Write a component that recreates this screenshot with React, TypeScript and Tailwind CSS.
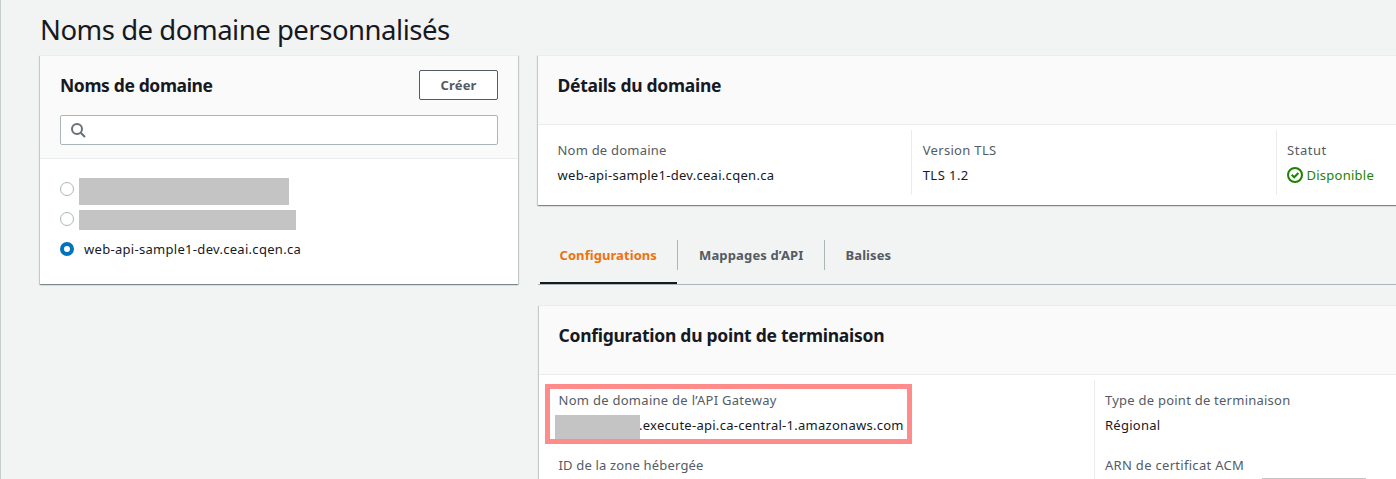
import type { ReactNode } from "react";

const cardShadow =
  "shadow-[0_1px_1px_0_rgba(0,28,36,0.3),1px_1px_1px_0_rgba(0,28,36,0.15),-1px_1px_1px_0_rgba(0,28,36,0.15)]";

function Card({ className, children }: { className: string; children: ReactNode }) {
  return (
    <section className={`border-t border-[#eaeded] bg-white ${cardShadow} ${className}`}>{children}</section>
  );
}

function CardTitle({ className, children }: { className: string; children: ReactNode }) {
  return <h2 className={`whitespace-nowrap text-[17.5px] leading-[22px] font-bold ${className}`}>{children}</h2>;
}

function Field({ label, labelClass, children }: { label: string; labelClass: string; children?: ReactNode }) {
  return (
    <div className="whitespace-nowrap text-[13px] leading-5">
      <div className="text-[#545b64]">
        <span className={labelClass}>{label}</span>
      </div>
      <div className="mt-[5px] flex h-5 items-center">{children}</div>
    </div>
  );
}

function Radio({ checked = false }: { checked?: boolean }) {
  return checked ? (
    <span className="size-3.5 shrink-0 rounded-full border-[4.5px] border-[#0073bb] bg-white" />
  ) : (
    <span className="size-3.5 shrink-0 rounded-full border border-[#aab7b8] bg-white" />
  );
}

function DomainList() {
  return (
    <Card className="h-[229px] w-[478px] shrink-0">
      <div className="h-[103px] border-b border-[#eaeded] bg-[#fafafa] px-5 pt-3.5">
        <div className="flex items-center justify-between">
          <CardTitle className="tracking-[-0.37px]">Noms de domaine</CardTitle>
          <button className="h-[30px] w-[79px] rounded-[2px] border border-[#545b64] bg-white pt-px text-[13px] font-bold text-[#545b64]">
            <span className="tracking-[0.2px]">Créer</span>
          </button>
        </div>
        <div className="mt-[15px] flex h-[30px] items-center rounded-[2px] border border-[#aab7b8] bg-white pl-[9px]">
          <svg className="size-4" viewBox="0 0 16 16" fill="none" stroke="#687078" strokeWidth="2">
            <circle cx="7" cy="7" r="5" />
            <path d="M10.7 10.7 15 15" />
          </svg>
        </div>
      </div>
      <div className="flex flex-col px-5 pt-[15px] text-[13px]">
        <div className="flex h-[30px] items-center">
          <Radio />
          <span className="mt-[5px] ml-[5px] h-[27px] w-[210px] bg-[#c4c4c4]" />
        </div>
        <div className="flex h-[30px] items-center">
          <Radio />
          <span className="mt-0.5 ml-[5px] h-5 w-[217px] bg-[#c4c4c4]" />
        </div>
        <div className="flex h-[30px] items-center">
          <Radio checked />
          <span className="ml-2.5 leading-5 tracking-[0.3px]">web-api-sample1-dev.ceai.cqen.ca</span>
        </div>
      </div>
    </Card>
  );
}

function DomainDetails() {
  return (
    <Card className="h-[150px]">
      <div className="h-[69px] border-b border-[#eaeded] bg-[#fafafa] px-[19.5px] pt-[18px]">
        <CardTitle className="tracking-[-0.28px]">Détails du domaine</CardTitle>
      </div>
      <div className="flex pt-[5px]">
        <div className="h-[65px] w-[373px] pt-2.5 pl-[19.5px]">
          <Field label="Nom de domaine" labelClass="tracking-[0.22px]">
            <span className="tracking-[0.29px]">web-api-sample1-dev.ceai.cqen.ca</span>
          </Field>
        </div>
        <div className="h-[65px] w-[365px] border-l border-[#eaeded] pt-2.5 pl-[10.7px]">
          <Field label="Version TLS" labelClass="tracking-[0.32px]">
            <span className="tracking-[0.45px]">TLS 1.2</span>
          </Field>
        </div>
        <div className="h-[65px] border-l border-[#eaeded] pt-2.5 pl-2.5">
          <Field label="Statut" labelClass="tracking-[0.55px]">
            <svg className="size-4" viewBox="0 0 16 16" fill="none" stroke="#1d8102" strokeWidth="2">
              <circle cx="8" cy="8" r="7" />
              <path d="m4.7 7.8 2.5 2.5L11.4 6" />
            </svg>
            <span className="ml-[3.5px] tracking-[0.25px] text-[#1d8102]">Disponible</span>
          </Field>
        </div>
      </div>
    </Card>
  );
}

function TabBar() {
  return (
    <nav className="mt-[34px] flex h-[46px] items-start border-b border-[#aab7b8] pl-0.5 text-[13px] leading-[30px] font-bold whitespace-nowrap text-[#545b64]">
      <div className="mt-px h-11 w-[137px] border-b-2 border-[#16191f] pl-[19.5px] text-[#ec7211]">
        <span className="tracking-[0.07px]">Configurations</span>
      </div>
      <div className="mt-px h-[30px] w-[147px] border-l border-[#aab7b8] pl-[21px]">
        <span className="tracking-[0.15px]">Mappages d’API</span>
      </div>
      <div className="mt-px h-[30px] border-l border-[#aab7b8] pl-[20.5px]">
        <span className="tracking-[0.1px]">Balises</span>
      </div>
    </nav>
  );
}

function EndpointConfiguration() {
  return (
    <Card className="mt-5 ml-px h-[240px]">
      <div className="h-[69px] border-b border-[#eaeded] bg-[#fafafa] px-[19.5px] pt-[18px]">
        <CardTitle className="tracking-[-0.27px]">Configuration du point de terminaison</CardTitle>
      </div>
      <div className="flex pt-[5px]">
        <div className="relative w-[555px] pt-2.5 pl-[19.5px]">
          <Field label="Nom de domaine de l’API Gateway" labelClass="tracking-[0.28px]">
            <span className="relative z-10 mt-[3px] -ml-[3.5px] h-6 w-[85px] shrink-0 bg-[#c4c4c4]" />
            <span className="-ml-px tracking-[0.27px]">.execute-api.ca-central-1.amazonaws.com</span>
          </Field>
          <div className="absolute top-1 left-1.5 h-[60px] w-[367px] border-[5px] border-[#ff8b8b]" />
          <div className="mt-5">
            <Field label="ID de la zone hébergée" labelClass="tracking-[0.17px]" />
          </div>
        </div>
        <div className="h-[160px] border-l border-[#eaeded] pt-2.5 pl-2.5">
          <Field label="Type de point de terminaison" labelClass="tracking-[0.24px]">
            <span className="tracking-[0.26px]">Régional</span>
          </Field>
          <div className="mt-5">
            <Field label="ARN de certificat ACM" labelClass="tracking-[0.3px]">
              <span className="-mt-0.5 ml-[157px] h-5 w-[104px] shrink-0 self-start bg-[#c4c4c4]" />
            </Field>
          </div>
        </div>
      </div>
    </Card>
  );
}

export default function App() {
  return (
    <div className="h-[479px] w-[1396px] overflow-hidden border-l border-[#c5cccd] bg-[#f2f3f3] pl-[39px] font-['Noto_Sans',sans-serif] text-[#16191f]">
      <h1 className="h-[55px] pt-3 text-[27.5px] leading-9 whitespace-nowrap">
        <span className="tracking-[-0.48px]">Noms de domaine personnalisés</span>
      </h1>
      <div className="flex items-start gap-5">
        <DomainList />
        <main className="w-[870px] shrink-0">
          <DomainDetails />
          <TabBar />
          <EndpointConfiguration />
        </main>
      </div>
    </div>
  );
}
